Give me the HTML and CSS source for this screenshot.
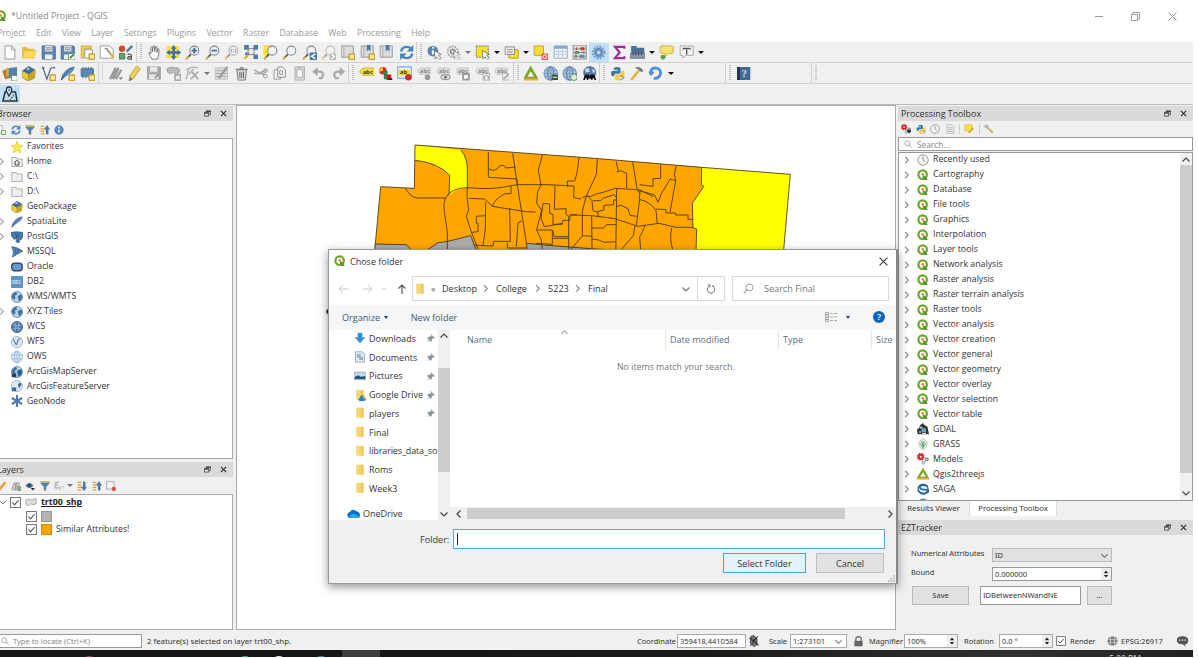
FILE: index.html
```html
<!DOCTYPE html>
<html lang="en">
<head>
<meta charset="utf-8">
<title>*Untitled Project - QGIS</title>
<link rel="stylesheet" href="styles.css">
</head>
<body>
<svg class="defs" aria-hidden="true">
<defs>
<symbol id="q" viewBox="0 0 16 16"><circle cx="7.5" cy="7.5" r="5.6" fill="none" stroke="#6fa52c" stroke-width="3"/><path d="M9 8l5.500 6.500h-4L7.500 10z" fill="#4f8f2a"/><circle cx="7.600" cy="7" r="1.700" fill="#ee8020"/></symbol>
<symbol id="plus" viewBox="0 0 16 16"><rect x="9.500" y="9.500" width="6" height="6" rx="1" fill="#f5e9a0" stroke="#c9a227" stroke-width="1.600"/></symbol>
<symbol id="new" viewBox="0 0 16 16"><path d="M3 1h7l3.500 3.500V15H3z" fill="#fff" stroke="#999"/><path d="M10 1v4h3.500" fill="none" stroke="#999"/></symbol>
<symbol id="open" viewBox="0 0 16 16"><path d="M1 14V2h5l1.500 2H14v3" fill="#e8bb3f"/><path d="M1 14L3.500 6H16l-2 8z" fill="#ffd85a" stroke="#e0ae30" stroke-width=".6"/></symbol>
<symbol id="save" viewBox="0 0 16 16"><path d="M1 1h13l1 1v13H1z" fill="#5b86b5" stroke="#45678c"/><path d="M4 1h8v6H4z" fill="#ddd"/><path d="M4 10h8v5H4z" fill="#eee"/><path d="M5 3h6M5 5h6" stroke="#777" stroke-width=".8"/></symbol>
<symbol id="saveas" viewBox="0 0 16 16"><use href="#save"/><path d="M9 9h7v7H9z" fill="#fff" stroke="#5b9a5b"/><path d="M10.500 14l4-4" stroke="#3d8a3d" stroke-width="2"/></symbol>
<symbol id="layout" viewBox="0 0 16 16"><path d="M1 1h11v3H4v10H1z" fill="#f1cf50" stroke="#b99a3a" stroke-width=".7"/><path d="M5 5h8v9H5z" fill="#fff" stroke="#999"/><use href="#plus"/></symbol>
<symbol id="manager" viewBox="0 0 16 16"><path d="M1 1h10l4 4v9H1z" fill="#fff" stroke="#999"/><path d="M6 4q3-1 3 2l3 3" fill="none" stroke="#888" stroke-width="1.600"/><path d="M11 8l4 5" stroke="#d6b438" stroke-width="2.400"/></symbol>
<symbol id="style" viewBox="0 0 16 16"><circle cx="4" cy="4" r="3.400" fill="#d3492e"/><path d="M1 9h6v6H1z" fill="#6ba06d" stroke="#47784b"/><path d="M9 7l6-6" stroke="#5b7ba0" stroke-width="2.500"/><path d="M10 10q4-1 4 1.500V15h-3q-2-1 0-2.500h3" fill="none" stroke="#555" stroke-width="1.400"/></symbol>
<symbol id="hand" viewBox="0 0 16 16"><path d="M5 15L1.500 8.500q1-1.500 2.500 1V2.500q1-1 1.700 0V7L6.300 1.300q1-1 1.700 0V7l.8-5q1-.8 1.600.3V8l.7-4q1.200-.6 1.600.5L12 12l-1 3z" fill="#fff" stroke="#666" stroke-width=".9"/></symbol>
<symbol id="pan" viewBox="0 0 16 16"><path d="M0 1h14v13H0z" fill="#f7df4c"/><path d="M8 0l3 4H9.300v2.700H12V5l4 3-4 3V9.300H9.300V12H11l-3 4-3-4h1.700V9.300H4V11L0 8l4-3v1.700h2.700V4H5z" fill="#416f9e"/></symbol>
<symbol id="mag" viewBox="0 0 16 16"><circle cx="9.700" cy="6" r="4.800" fill="#eef2f5" stroke="#888" stroke-width="1.100"/><path d="M6 10L1 15" stroke="#555" stroke-width="1.800"/><path d="M3.500 12.500L1 15" stroke="#e0b23c" stroke-width="2.200"/></symbol>
<symbol id="zin" viewBox="0 0 16 16"><use href="#mag"/><path d="M9.700 3v6M6.700 6h6" stroke="#426f9e" stroke-width="2"/></symbol>
<symbol id="zout" viewBox="0 0 16 16"><use href="#mag"/><path d="M6.700 6h6" stroke="#426f9e" stroke-width="2"/></symbol>
<symbol id="z11" viewBox="0 0 16 16"><g opacity=".6"><use href="#mag"/><path d="M7.500 4v4M12 4v4M9.700 4.500v.8M9.700 7v.8" stroke="#666" stroke-width="1.200"/></g></symbol>
<symbol id="zfull" viewBox="0 0 16 16"><path d="M1 0h5v5H1zM11 0h5v5h-5zM11 10h5v5h-5zM2 8h3v3H2z" fill="#4a78a8"/><path d="M3 2l10 10M13 2L2 14" stroke="#777" stroke-width="1.400"/><circle cx="8.500" cy="7" r="3.500" fill="#e8eef2" stroke="#777"/><path d="M5 11l-4 4" stroke="#dcae38" stroke-width="2"/></symbol>
<symbol id="zsel" viewBox="0 0 16 16"><path d="M0 0h9v11H0z" fill="#f6e13a"/><use href="#mag"/></symbol>
<symbol id="zlast" viewBox="0 0 16 16"><use href="#mag"/><path d="M8 8h8v8H8z" fill="#4c7ba9"/><path d="M14 9.500L10 12l4 2.500" stroke="#fff" fill="none" stroke-width="1.500"/></symbol>
<symbol id="znext" viewBox="0 0 16 16"><g opacity=".5"><use href="#mag"/><path d="M9 9h7v7H9z" fill="#888"/><path d="M11 10l3 2.500L11 15" stroke="#fff" fill="none" stroke-width="1.500"/></g></symbol>
<symbol id="book" viewBox="0 0 16 16"><path d="M1 1h13v12H1z" fill="#ddd" stroke="#999"/><path d="M4 1v12" stroke="#aaa"/></symbol>
<symbol id="booka" viewBox="0 0 16 16"><use href="#book"/><use href="#plus"/></symbol>
<symbol id="bookb" viewBox="0 0 16 16"><use href="#book"/><path d="M7 0h4v7L9 5 7 7z" fill="#4c7ba9"/><use href="#plus"/></symbol>
<symbol id="bookc" viewBox="0 0 16 16"><use href="#book"/><path d="M7 0h4v7L9 5 7 7z" fill="#4c7ba9"/></symbol>
<symbol id="refresh" viewBox="0 0 16 16"><path d="M2 7q1-5 6-5 3 0 4.500 2M14 9q-1 5-6 5-3 0-4.500-2" fill="none" stroke="#4a84bd" stroke-width="2.600"/><path d="M15 0v7H8zM1 16V9h7z" fill="#4a84bd"/></symbol>
<symbol id="cursor" viewBox="0 0 16 16"><path d="M7.500 6l1 9 2-2.500 3 3 1.500-1.500-3-3L15 10z" fill="#fff" stroke="#666" stroke-width=".8"/></symbol>
<symbol id="ident" viewBox="0 0 16 16"><circle cx="6" cy="6.500" r="5.700" fill="#5686b8"/><path d="M6 5.500V10" stroke="#fff" stroke-width="2"/><circle cx="6.300" cy="3" r="1.100" fill="#fff"/><use href="#cursor"/></symbol>
<symbol id="act" viewBox="0 0 16 16"><circle cx="7" cy="7" r="5.500" fill="none" stroke="#aaa" stroke-width="2" stroke-dasharray="2 1"/><circle cx="7" cy="7" r="2.300" fill="none" stroke="#999" stroke-width="2"/><use href="#cursor" opacity=".6"/></symbol>
<symbol id="selr" viewBox="0 0 16 16"><path d="M1 1h13v12H1z" fill="#f8de32" stroke="#777" stroke-dasharray="2 1"/><use href="#cursor"/></symbol>
<symbol id="selform" viewBox="0 0 16 16"><path d="M5 5h10v9H5z" fill="#f8de32" stroke="#b39c2e"/><path d="M1 2h10v8H1z" fill="#eee" stroke="#888"/><path d="M3 5h6M3 7.500h6" stroke="#888"/></symbol>
<symbol id="desel" viewBox="0 0 16 16"><path d="M1 1h10v10H1z" fill="#f8de32" stroke="#bda22f"/><path d="M9 9h7v7H9z" fill="#e55b5b"/><circle cx="12.500" cy="12.500" r="2" fill="none" stroke="#fff"/></symbol>
<symbol id="table" viewBox="0 0 16 16"><path d="M1 1h14v13H1z" fill="#f5f8fa" stroke="#8eabc9"/><path d="M1 1h14v3H1z" fill="#83a9d0"/><path d="M1 7h14M1 10h14M5.500 4v10M10 4v10" stroke="#b5cade"/></symbol>
<symbol id="calc" viewBox="0 0 16 16"><path d="M1 0h14v15H1z" fill="#ddd" stroke="#888"/><path d="M2 4h12M2 8h12M2 12h12" stroke="#555" stroke-width=".7"/><path d="M4 4h1M9 4h4" stroke="#d43131" stroke-width="3"/><path d="M3 8h4M12 8h1" stroke="#46a064" stroke-width="3"/><path d="M3 12h2M8 12h5" stroke="#6685a4" stroke-width="3"/></symbol>
<symbol id="gear" viewBox="0 0 16 16"><circle cx="8" cy="8" r="6.400" fill="none" stroke="#6f9ac8" stroke-width="2" stroke-dasharray="2 1.350"/><circle cx="8" cy="8" r="3.700" fill="#8fb2d5" stroke="#6792c0" stroke-width="3"/><circle cx="8" cy="8" r="1.300" fill="#d9e8f6"/></symbol>
<symbol id="sigma" viewBox="0 0 16 16"><path d="M14 4V2H4L9 8l-5 6h10V12" fill="none" stroke="#9b2a9b" stroke-width="2.300"/></symbol>
<symbol id="ruler" viewBox="0 0 16 16"><path d="M1 1h6v2h8v7H1z" fill="#4a6f96"/><path d="M0 9h16v5H0z" fill="#8799ac" stroke="#667"/><path d="M3 9v2M6 9v2M9 9v2M12 9v2" stroke="#333"/></symbol>
<symbol id="tip" viewBox="0 0 16 16"><path d="M3 1h11l1 1v6l-1 1h-4l-4 4V9H3L1 8V2z" fill="#f6e272" stroke="#c8b13f"/><circle cx="4" cy="13" r="2.500" fill="#5c9a5c"/></symbol>
<symbol id="tee" viewBox="0 0 16 16"><path d="M1 1h14v10H7l-3 3v-3H1z" fill="#f4f4f4" stroke="#aaa"/><path d="M4.500 5V3.500h7V5M8 3.500V10" stroke="#555" stroke-width="1.400" fill="none"/></symbol>
<symbol id="dsm" viewBox="0 0 16 16"><path d="M0 5l6-2 2 10-5 1z" fill="#b57c32"/><path d="M4 2l9 1-1 9-8-1z" fill="#dba63b"/><path d="M7 2l9-1v10l-9 2z" fill="#527fae"/><path d="M10 10h6v6h-6z" fill="#fff" stroke="#5a985a"/></symbol>
<symbol id="gpkg" viewBox="0 0 16 16"><path d="M1 6l7-4 7 3-1 8-7 3-6-4z" fill="#edce31" stroke="#8e7821" stroke-width=".7"/><path d="M7 9l8-4-1 8-7 3z" fill="#c4a523"/><path d="M1 5l7-5 7 4-7 5z" fill="#406d99"/><path d="M5 4l3-3 1 3z" fill="#b9d1e5"/></symbol>
<symbol id="vee" viewBox="0 0 16 16"><circle cx="2" cy="2" r="1.500" fill="#6685a4"/><path d="M2 2l4 12 4-11q1-2 5-1" fill="none" stroke="#4d6a88" stroke-width="1.300"/></symbol>
<symbol id="veep" viewBox="0 0 16 16"><use href="#vee"/><use href="#plus"/></symbol>
<symbol id="feather" viewBox="0 0 16 16"><path d="M1 15Q3 3 15 1q-1 5-5 7T1 15z" fill="#6f9ac6" stroke="#39658f" stroke-width=".8"/><path d="M1 15Q5 7 13 2" stroke="#2c4e70" fill="none"/></symbol>
<symbol id="featherp" viewBox="0 0 16 16"><use href="#feather"/><use href="#plus"/></symbol>
<symbol id="virt" viewBox="0 0 16 16"><path d="M1 3h13v8H1z" fill="#5b88b7" stroke="#3f6791"/><path d="M3 1v2M6 1v2M9 1v2M12 1v2M3 11v2M6 11v2" stroke="#6286aa" stroke-width="1.500"/><use href="#plus"/></symbol>
<symbol id="pens" viewBox="0 0 16 16"><path d="M2 14L8 2M5 14L11 2M8 14L14 4" stroke="#999" stroke-width="2.500"/><path d="M11 12h5l-2.500 3z" fill="#888"/></symbol>
<symbol id="pen" viewBox="0 0 16 16"><path d="M3 10L10 0l4 3-7 10-5 3z" fill="#eed154" stroke="#ad9137" stroke-width=".8"/><path d="M2 16l1-4 3 2z" fill="#777"/></symbol>
<symbol id="gsave" viewBox="0 0 16 16"><path d="M1 1h14v13H1z" fill="#aaa" stroke="#999"/><path d="M4 1h8v5H4zM3 9h10v5H3z" fill="#e8e8e8"/><path d="M9 13l5-5" stroke="#999" stroke-width="2"/></symbol>
<symbol id="gpoly" viewBox="0 0 16 16"><path d="M1 3q4-3 8-1 6-1 5 5-4 2-6 0-5 2-7-1z" fill="#bbb" stroke="#999"/><path d="M9.500 9.500h6v6h-6z" fill="#eee" stroke="#aaa" stroke-width="2"/></symbol>
<symbol id="vert" viewBox="0 0 16 16"><path d="M1 4l7-3 6 1M4 3L1 14M9 3L4 9" stroke="#b5b5b5" fill="none" stroke-width="1.500"/><path d="M7 6l7 8M14 6l-8 8" stroke="#aaa" stroke-width="2"/></symbol>
<symbol id="medit" viewBox="0 0 16 16"><path d="M1 2h13v12H1z" fill="#ddd" stroke="#bbb"/><path d="M2 5h11M2 8h11M2 11h11" stroke="#aaa"/><path d="M5 13l9-12" stroke="#999" stroke-width="2.400"/></symbol>
<symbol id="trash" viewBox="0 0 16 16"><path d="M3 4h10l-1 11H4z" fill="#ddd" stroke="#777"/><path d="M1.500 3.500h13M6 2h4M6 6v7M8 6v7M10 6v7" stroke="#777" stroke-width="1.200"/></symbol>
<symbol id="cut" viewBox="0 0 16 16"><path d="M1 4l11 6M1 8h11M7 7l8-3" stroke="#aaa" stroke-width="1.500"/><circle cx="13" cy="5" r="2" fill="none" stroke="#999"/><circle cx="13" cy="11" r="2" fill="none" stroke="#999"/></symbol>
<symbol id="copy" viewBox="0 0 16 16"><path d="M2 4h7v10H2z" fill="#eee" stroke="#999"/><path d="M6 1h5l3 3v8H6z" fill="#f4f4f4" stroke="#888"/><path d="M8 5h3v4H8z" fill="none" stroke="#999"/></symbol>
<symbol id="paste" viewBox="0 0 16 16"><path d="M3 1h10v14H3z" fill="#ddd" stroke="#aaa"/><path d="M5 4h6v8H5zM6 2h4" fill="#fff" stroke="#aaa"/></symbol>
<symbol id="undo" viewBox="0 0 16 16"><path d="M4 6h6q5 2 1 7H8" fill="none" stroke="#aaa" stroke-width="2.500"/><path d="M7 1v10L1 6z" fill="#aaa"/></symbol>
<symbol id="redo" viewBox="0 0 16 16"><path d="M12 6H6q-5 2-1 7h3" fill="none" stroke="#aaa" stroke-width="2.500"/><path d="M9 1v10l6-5z" fill="#aaa"/></symbol>
<symbol id="abc" viewBox="0 0 16 16"><path d="M0 6l4-4h12v8H4z" fill="#f4dc3d" stroke="#c2a82b" stroke-width=".7"/><text x="4" y="8.500" class="tiny">abc</text></symbol>
<symbol id="diag" viewBox="0 0 16 16"><circle cx="5" cy="5" r="4" fill="#d32c20"/><path d="M5 1v4L1 6q0-4 4-5z" fill="#f1d22e"/><path d="M6 5h4v9H6z" fill="#218d45"/><path d="M9 9h5v6H9z" fill="#c52117"/><path d="M11 13h4v2h-4z" fill="#222"/></symbol>
<symbol id="labhi" viewBox="0 0 16 16"><path d="M.5 1h15v12H.500z" fill="#e7f1fa" stroke="#4f9be0"/><path d="M1 4h13v6H1z" fill="#f4dc3d"/><text x="3" y="9" class="tiny">ab</text><circle cx="12" cy="12" r="3.500" fill="#cc2f2b"/></symbol>
<symbol id="gabc" viewBox="0 0 16 16"><path d="M0 5l3-3h11v7H3z" fill="#ddd" stroke="#bbb" stroke-width=".7"/><text x="3" y="7.800" class="tiny faded">abc</text></symbol>
<symbol id="ga" viewBox="0 0 16 16"><use href="#gabc"/><circle cx="11" cy="12" r="3" fill="#999"/></symbol>
<symbol id="gb" viewBox="0 0 16 16"><use href="#gabc"/><ellipse cx="10" cy="12" rx="5" ry="2.600" fill="#ddd" stroke="#888"/><circle cx="10" cy="12" r="1.500" fill="#777"/></symbol>
<symbol id="gc" viewBox="0 0 16 16"><use href="#gabc"/><path d="M8.500 8.500h6v6h-6z" fill="#fff" stroke="#999" stroke-width="2"/></symbol>
<symbol id="gd" viewBox="0 0 16 16"><use href="#gabc"/><path d="M8.500 8h7v7h-7z" fill="#eee" stroke="#aaa"/><path d="M10 14q-1-4 2-4 3 0 2 4" fill="none" stroke="#999"/></symbol>
<symbol id="ge" viewBox="0 0 16 16"><use href="#gabc"/><path d="M9 8h7v7H9z" fill="#eee" stroke="#bbb"/><path d="M10 14l5-5" stroke="#aaa" stroke-width="2"/></symbol>
<symbol id="tri" viewBox="0 0 16 16"><path d="M8 2.500L14 13H2z" fill="#fff" stroke="#7aaa25" stroke-width="3"/><path d="M0 13h16v2.500H0z" fill="#f0a92f"/></symbol>
<symbol id="world" viewBox="0 0 16 16"><circle cx="8" cy="8" r="7.200" fill="#a9c6e2" stroke="#5d86ae"/><ellipse cx="8" cy="8" rx="3.200" ry="7" fill="none" stroke="#4a749f"/><path d="M8 1v14M1 8h14M2 4.500h12M2 11.500h12" stroke="#6b91b7" stroke-width=".8"/></symbol>
<symbol id="worlda" viewBox="0 0 16 16"><use href="#world"/><path d="M9 9h7v6H9z" fill="#335c35"/><path d="M10 12h5" stroke="#fff"/></symbol>
<symbol id="worldb" viewBox="0 0 16 16"><use href="#world"/><circle cx="12.500" cy="12" r="3.500" fill="#d9ead7" stroke="#5f985f"/></symbol>
<symbol id="worldc" viewBox="0 0 16 16"><circle cx="8" cy="7" r="7" fill="#557ca5"/><path d="M3 3l4-1 1 4-4 1zM10 3l4 2-2 3z" fill="#cadceb"/><path d="M3 9h4l1 2 1-2h4l2 6h-5l-2-3-2 3H1z" fill="#111"/><circle cx="4" cy="14" r="1" fill="#fff"/><circle cx="12" cy="14" r="1" fill="#fff"/></symbol>
<symbol id="py" viewBox="0 0 16 16"><path d="M4 4V2q3-2 7 0v5q-1 2-5 1-2 1-2 3H2Q-1 5 4 5h4V4z" fill="#3977a8"/><path d="M12 5h2q3 4 0 7H8v1h4v1q-4 3-7 0v-4q1-2 5-1 2-1 2-4z" fill="#f7cd3e"/><path d="M11 10l4 2.500-4 2.500" stroke="#777" fill="none"/></symbol>
<symbol id="hammer" viewBox="0 0 16 16"><path d="M2 15L11 4" stroke="#e4b338" stroke-width="2.600"/><path d="M6 2q5-3 9 3l-2 2q-2-4-7-5z" fill="#777"/></symbol>
<symbol id="swirl" viewBox="0 0 16 16"><path d="M3 8q-1-6 5-6 6 1 5 7-2 5-7 4" fill="none" stroke="#4f8ed1" stroke-width="3"/><path d="M0 6h7l-4 5z" fill="#4f8ed1"/></symbol>
<symbol id="help" viewBox="0 0 16 16"><path d="M1 1h14v14H1z" fill="#416a94"/><path d="M1 1h3v14H1z" fill="#223548"/><text x="6" y="12" class="qm">?</text></symbol>
<symbol id="ez" viewBox="0 0 16 16"><path d="M4.500 6H3L1 15h14l-1.500-9H10" fill="#c2d9ea" stroke="#28333c" stroke-width="1.500"/><path d="M7 10L4.500 5.500Q3.500 1 7 1t2.500 4.500z" fill="#c2d9ea" stroke="#28333c" stroke-width="1.300"/><circle cx="7" cy="4" r=".8" fill="#28333c"/><path d="M11 8.500q1.500 2-1 3t-1 3" stroke="#28333c" stroke-dasharray="2 1" fill="none"/></symbol>
<symbol id="float" viewBox="0 0 16 16"><path d="M5 6V2h10v8h-4M1 6h10v8H1z" fill="none" stroke="#333" stroke-width="1.600"/><path d="M5 2.800h10M1 7h10" stroke="#333" stroke-width="2.500"/></symbol>
<symbol id="x" viewBox="0 0 16 16"><path d="M2 2l12 12M14 2L2 14" stroke="currentColor" stroke-width="2.800"/></symbol>
<symbol id="xt" viewBox="0 0 16 16"><path d="M1 1l14 14M15 1L1 15" stroke="currentColor" stroke-width="1.900"/></symbol>
<symbol id="filter" viewBox="0 0 16 16"><path d="M1 1h14v3l-5 5v6H6V9L1 4z" fill="#4f82b4"/><path d="M1 0h14v3H1z" fill="#ccbc6d"/></symbol>
<symbol id="collapse" viewBox="0 0 16 16"><path d="M1 2h6M1 6h6M1 10h6M1 14h6" stroke="#dda13d" stroke-width="2"/><path d="M11.500 15V5" stroke="#4b78a6" stroke-width="4"/><path d="M6 7l5.500-7L16 7z" fill="#4b78a6"/></symbol>
<symbol id="expand" viewBox="0 0 16 16"><path d="M1 2h6M1 6h6M1 10h6M1 14h6" stroke="#dda13d" stroke-width="2"/><path d="M11.500 1v10" stroke="#4b78a6" stroke-width="4"/><path d="M6 9l5.500 7L16 9z" fill="#4b78a6"/></symbol>
<symbol id="info" viewBox="0 0 16 16"><circle cx="8" cy="8" r="7.500" fill="#5688bb"/><path d="M8 7v5" stroke="#fff" stroke-width="2.200"/><circle cx="8" cy="4" r="1.400" fill="#fff"/></symbol>
<symbol id="addl" viewBox="0 0 16 16"><path d="M1 1h9v12H1z" fill="#fff" stroke="#888"/><path d="M9 9h6v6H9z" fill="#fff" stroke="#5d995d" stroke-width="1.500"/></symbol>
<symbol id="star" viewBox="0 0 16 16"><path d="M8 0l2.300 5.700 5.700.5-4.400 3.700L13 15.700l-5-3.200-5 3.200 1.400-5.800L0 6.200l5.700-.5z" fill="#fbe94b" stroke="#d8bd23" stroke-width=".8"/></symbol>
<symbol id="folder" viewBox="0 0 16 16"><path d="M1 3.500V2h6l1 2h7v10H1z" fill="#eee" stroke="#999"/></symbol>
<symbol id="home" viewBox="0 0 16 16"><use href="#folder"/><path d="M4.500 9L8 5.500 11.500 9M5.500 8.500V12h5V8.500" fill="none" stroke="#444" stroke-width="1.300"/></symbol>
<symbol id="pg" viewBox="0 0 16 16"><path d="M0 2q7-2 16 0 1 5-2 9l-3 1v3q-3 2-4-1v-4l-3 1Q0 7 0 2z" fill="#4d7caf" stroke="#2f567d"/><path d="M6 3q3 3 1 6M11 3q-2 3 0 6" stroke="#234669" fill="none"/></symbol>
<symbol id="mssql" viewBox="0 0 16 16"><path d="M1 1q7 0 15 6-6 2-14 8 3-7-1-14z" fill="#547faf" stroke="#34608b"/><path d="M5 2q3 5 0 11M9 4q2 3 0 7" stroke="#40699a" fill="none"/></symbol>
<symbol id="ora" viewBox="0 0 16 16"><rect x="1" y="3" width="14" height="10" rx="4" fill="#6c9ac8" stroke="#28496c" stroke-width="1.700"/></symbol>
<symbol id="db2" viewBox="0 0 16 16"><rect width="16" height="16" rx="1" fill="#5f92c5"/><text x="1" y="10" class="db">DB2</text></symbol>
<symbol id="earth" viewBox="0 0 16 16"><circle cx="8" cy="8" r="7.400" fill="#b6d0e8" stroke="#5c87b0"/><path d="M2 4l5-3 1 4-3 1 1 3-2 3-3-4zM9 7l5-3 1 5-3 5-2-2z" fill="#426f9d"/></symbol>
<symbol id="wcs" viewBox="0 0 16 16"><circle cx="8" cy="8" r="7.400" fill="#527eaa" stroke="#2f5375"/><path d="M2 5q6 3 12 0M2 11q6-3 12 0M5 2q3 6 0 12M11 2q-3 6 0 12" stroke="#9cb9d6" fill="none"/></symbol>
<symbol id="wfs" viewBox="0 0 16 16"><circle cx="8" cy="8" r="7.400" fill="#d8e6f2" stroke="#88a9c9"/><path d="M3 4l4 8 3-8q1-1 3 0" stroke="#416991" fill="none" stroke-width="1.300"/></symbol>
<symbol id="ows" viewBox="0 0 16 16"><circle cx="8" cy="8" r="7.400" fill="#e6f1fa" stroke="#8db2d5"/><ellipse cx="8" cy="8" rx="3.500" ry="7.400" fill="none" stroke="#8db2d5"/><path d="M1 5.500h14M1 10.500h14M8 1v14" stroke="#8db2d5"/></symbol>
<symbol id="arcm" viewBox="0 0 16 16"><use href="#earth"/><path d="M1 10h6v5H1z" fill="#1e3d5a"/><path d="M8 7l5-3 1 6-4 5z" fill="#305d88"/></symbol>
<symbol id="arcf" viewBox="0 0 16 16"><circle cx="8" cy="8" r="7.400" fill="#dbe9f5" stroke="#8db2d5"/><path d="M1 10h6v5H1zM9 6l3-3 2 3-3 5z" fill="#44698d"/></symbol>
<symbol id="node" viewBox="0 0 16 16"><path d="M8 0v16M1 4l14 8M15 4L1 12" stroke="#507dab" stroke-width="2.700"/></symbol>
<symbol id="sheet" viewBox="0 0 16 16"><path d="M3 1h8l3 3v11H3z" fill="#eee" stroke="#aaa"/><path d="M5 6h7M5 9h7M5 12h7" stroke="#999"/></symbol>
<symbol id="clock" viewBox="0 0 16 16"><circle cx="8" cy="8" r="7" fill="#f3f5f5" stroke="#8c9296" stroke-width="1.200"/><path d="M8 3v5l3 3" stroke="#8c9296" fill="none" stroke-width="1.300"/></symbol>
<symbol id="model" viewBox="0 0 16 16"><circle cx="5" cy="5" r="2.800" fill="#fff" stroke="#d52c2c" stroke-width="3"/><circle cx="5" cy="5" r="4.500" fill="none" stroke="#d52c2c" stroke-width="1.500" stroke-dasharray="2 1.500"/><circle cx="13" cy="8.500" r="1.800" fill="#eee" stroke="#888" stroke-width="2"/><circle cx="8.500" cy="13" r="1.800" fill="#eee" stroke="#9db7e0" stroke-width="2"/></symbol>
<symbol id="modelm" viewBox="0 0 16 16"><use href="#model"/><path d="M9 9h7v3l-3 3-4-4z" fill="#333"/></symbol>
<symbol id="note" viewBox="0 0 16 16"><path d="M1 1h12v10H9l-2 3v-3H1z" fill="#f4df4e" stroke="#d3bc38"/><path d="M8 14l7-8" stroke="#d1a936" stroke-width="2.500"/></symbol>
<symbol id="wrench" viewBox="0 0 16 16"><path d="M1 3l3-2 3 3-1 3-3-1zM6 6l7 7" stroke="#999" stroke-width="1.500" fill="#ccc"/><path d="M8 8l6 6" stroke="#cdb553" stroke-width="3"/></symbol>
<symbol id="gdal" viewBox="0 0 16 16"><path d="M0 8l3-1 1-4 4-3 1 2 5 3 2 10H1z" fill="#333"/><path d="M6 7h6v5H6z" fill="#5cabc4"/><path d="M4 5h3v2H4zM3 11h2v2H3zM7 13h5v2H7z" fill="#dde"/></symbol>
<symbol id="grass" viewBox="0 0 16 16"><path d="M2 6l6-6 6 6-2 7-4 3-4-3z" fill="#e3e9e3" stroke="#aaa" stroke-width=".7"/><path d="M8 14V5M8 13L4 7M8 13l4-6M8 11L6 4M8 11l2-7" stroke="#5fa565" stroke-width="1.100"/></symbol>
<symbol id="saga" viewBox="0 0 16 16"><circle cx="8" cy="8" r="6.500" fill="#eef6fc" stroke="#266798" stroke-width="1.800"/><path d="M14 4Q5 1 4 5t8 4-1 5Q6 15 1 10" fill="none" stroke="#266798" stroke-width="2.300"/></symbol>
<symbol id="chev" viewBox="0 0 16 16"><path d="M5 1l7 7-7 7" fill="none" stroke="currentColor" stroke-width="2.400"/></symbol>
<symbol id="find" viewBox="0 0 16 16"><circle cx="6.500" cy="6.500" r="5" fill="none" stroke="currentColor" stroke-width="1.400"/><path d="M10 10l5 5" stroke="currentColor" stroke-width="1.600"/></symbol>
<symbol id="spin" viewBox="0 0 16 16"><path d="M3 6l5-6 5 6zM3 10l5 6 5-6z" fill="#222"/></symbol>
<symbol id="check" viewBox="0 0 16 16"><path d="M.8.800h14.400v14.400H.800z" fill="#fff" stroke="#777" stroke-width="1.500"/><path d="M3.500 8l3 3.500 6-7" fill="none" stroke="#555" stroke-width="1.600"/></symbol>
<symbol id="ftab" viewBox="0 0 16 16"><path d="M3 1h8l1 1v13l-9-1z" fill="#f7d672"/><path d="M9 1h3l1 1v12h-3z" fill="#f0c860"/></symbol>
<symbol id="pin" viewBox="0 0 16 16"><path d="M8 1l7 7-2 1-1-1-3 3v3l-2 1-6-7 2-2h3l3-3zM4 12l-4 4" fill="#8a959f" stroke="#8a959f"/></symbol>
</defs></svg>

<div class="app">
  <header class="title"><svg class="i12"><use href="#q"/></svg><span>*Untitled Project - QGIS</span>
    <div class="wins"><i class="min"></i><svg viewBox="0 0 9 9"><path d="M.5 2.500h6v6h-6zM2 2V.5h6.500V7H7" fill="none" stroke="#999"/></svg><svg viewBox="0 0 9 9"><path d="M.5.500l8 8M8.500.500l-8 8" stroke="#999"/></svg></div>
  </header>
  <nav class="menu"><span>Project</span><span>Edit</span><span>View</span><span>Layer</span><span>Settings</span><span>Plugins</span><span>Vector</span><span>Raster</span><span>Database</span><span>Web</span><span>Processing</span><span>Help</span></nav>
  <div class="tb">
    <div class="grp g137"><svg><use href="#new"/></svg><svg><use href="#open"/></svg><svg><use href="#save"/></svg><svg><use href="#saveas"/></svg><svg><use href="#layout"/></svg><svg><use href="#manager"/></svg><svg><use href="#style"/></svg></div>
    <div class="grp g280"><i class="grip"></i><svg><use href="#hand"/></svg><svg><use href="#pan"/></svg><svg><use href="#zin"/></svg><svg><use href="#zout"/></svg><svg><use href="#z11"/></svg><svg><use href="#zfull"/></svg><svg><use href="#zsel"/></svg><svg><use href="#mag"/></svg><svg><use href="#zlast"/></svg><svg><use href="#znext"/></svg><svg><use href="#booka"/></svg><svg><use href="#bookb"/></svg><svg><use href="#bookc"/></svg><svg><use href="#refresh"/></svg></div>
    <div class="grp last"><i class="grip"></i><svg><use href="#ident"/></svg><svg><use href="#act"/></svg><b class="dd dim"></b><svg><use href="#selr"/></svg><b class="dd"></b><svg><use href="#selform"/></svg><b class="dd"></b><svg><use href="#desel"/></svg><svg><use href="#table"/></svg><svg><use href="#calc"/></svg><svg class="on"><use href="#gear"/></svg><svg><use href="#sigma"/></svg><svg><use href="#ruler"/></svg><b class="dd"></b><svg><use href="#tip"/></svg><svg><use href="#tee"/></svg><b class="dd"></b></div>
  </div>
  <div class="tb">
    <div class="grp g98"><svg><use href="#dsm"/></svg><svg><use href="#gpkg"/></svg><svg><use href="#veep"/></svg><svg><use href="#featherp"/></svg><svg><use href="#virt"/></svg></div>
    <div class="grp g251"><i class="grip"></i><svg><use href="#pens"/></svg><svg><use href="#pen"/></svg><svg><use href="#gsave"/></svg><svg><use href="#gpoly"/></svg><svg><use href="#vert"/></svg><b class="dd gray"></b><svg><use href="#medit"/></svg><svg><use href="#trash"/></svg><svg><use href="#cut"/></svg><svg><use href="#copy"/></svg><svg><use href="#paste"/></svg><svg><use href="#undo"/></svg><svg><use href="#redo"/></svg></div>
    <div class="grp g164"><i class="grip"></i><svg><use href="#abc"/></svg><svg><use href="#diag"/></svg><svg><use href="#labhi"/></svg><svg><use href="#ga"/></svg><svg><use href="#gb"/></svg><svg><use href="#gc"/></svg><svg><use href="#gd"/></svg><svg><use href="#ge"/></svg></div>
    <div class="grp g86"><i class="grip"></i><svg><use href="#tri"/></svg><svg><use href="#worlda"/></svg><svg><use href="#worldb"/></svg><svg><use href="#worldc"/></svg></div>
    <div class="grp g126"><i class="grip"></i><svg><use href="#py"/></svg><svg><use href="#hammer"/></svg><svg><use href="#swirl"/></svg><b class="dd"></b></div>
    <div class="grp g87"><i class="grip"></i><svg><use href="#help"/></svg></div>
    <div class="grp last"><i class="grip"></i></div>
  </div>
  <div class="tb third"><svg class="ezi"><use href="#ez"/></svg></div>

  <main class="work">
    <aside class="left">
      <div class="dt cut"><span>Browser</span><svg><use href="#float"/></svg><svg><use href="#x"/></svg></div>
      <div class="mini m1"><svg><use href="#addl"/></svg><svg><use href="#refresh"/></svg><svg><use href="#filter"/></svg><svg><use href="#collapse"/></svg><svg><use href="#info"/></svg></div>
      <ul class="tree browser">
        <li><i></i><svg><use href="#star"/></svg>Favorites</li>
        <li class="ex"><i></i><svg><use href="#home"/></svg>Home</li>
        <li class="ex"><i></i><svg><use href="#folder"/></svg>C:\</li>
        <li class="ex"><i></i><svg><use href="#folder"/></svg>D:\</li>
        <li><i></i><svg><use href="#gpkg"/></svg>GeoPackage</li>
        <li class="ex"><i></i><svg><use href="#feather"/></svg>SpatiaLite</li>
        <li class="ex"><i></i><svg><use href="#pg"/></svg>PostGIS</li>
        <li><i></i><svg><use href="#mssql"/></svg>MSSQL</li>
        <li><i></i><svg><use href="#ora"/></svg>Oracle</li>
        <li><i></i><svg><use href="#db2"/></svg>DB2</li>
        <li><i></i><svg><use href="#earth"/></svg>WMS/WMTS</li>
        <li class="ex"><i></i><svg><use href="#earth"/></svg>XYZ Tiles</li>
        <li><i></i><svg><use href="#wcs"/></svg>WCS</li>
        <li><i></i><svg><use href="#wfs"/></svg>WFS</li>
        <li><i></i><svg><use href="#ows"/></svg>OWS</li>
        <li><i></i><svg><use href="#arcm"/></svg>ArcGisMapServer</li>
        <li><i></i><svg><use href="#arcf"/></svg>ArcGisFeatureServer</li>
        <li><i></i><svg><use href="#node"/></svg>GeoNode</li>
      </ul>
      <div class="dt cut gap"><span>Layers</span><svg><use href="#float"/></svg><svg><use href="#x"/></svg></div>
      <div class="mini m2"><svg viewBox="0 0 16 16"><path d="M0 7l6 6 9-11" stroke="#e0a23b" stroke-width="4" fill="none"/></svg><svg viewBox="0 0 16 16"><path d="M1 14L5 3h3v11zM8 3h5v11H7z" fill="#ccc" stroke="#888"/><path d="M10 8h6v8h-6z" fill="#84a884"/></svg><svg viewBox="0 0 16 16"><path d="M0 7q7-8 14 0-7 8-14 0z" fill="#7b8ea2"/><circle cx="7" cy="7" r="3.500" fill="#2c5379"/><path d="M9 11h7l-3.500 4z" fill="#222"/></svg><svg><use href="#filter"/></svg><svg viewBox="0 0 16 16"><path d="M8 2Q1 1 2 5l4 1Q0 7 2 11h5" fill="none" stroke="#aaa" stroke-width="1.700"/><path d="M8 9h3v5H8zM13 9h3v5" fill="none" stroke="#aaa"/></svg><b class="dd gray"></b><svg><use href="#expand"/></svg><svg><use href="#collapse"/></svg><svg viewBox="0 0 16 16"><path d="M1 1h12v12H1z" fill="#f4f4f4" stroke="#888"/><circle cx="12.500" cy="12.500" r="3.500" fill="#e44b4b"/></svg></div>
      <div class="layers">
        <div class="l1"><svg class="c7" viewBox="0 0 16 16"><path d="M1 5l6 6 7-7" fill="none" stroke="#444" stroke-width="2"/></svg><svg class="ck"><use href="#check"/></svg><svg class="i12" viewBox="0 0 16 16"><path d="M1 4q4-3 8 0l6-2v7q-4 3-7 0-3 4-6 2Q0 8 1 4z" fill="#ddd" stroke="#999"/></svg><strong>trt00_shp</strong></div>
        <div class="l2"><svg class="ck"><use href="#check"/></svg><i class="sw"></i></div>
        <div class="l2"><svg class="ck"><use href="#check"/></svg><i class="sw or"></i><span>Similar Attributes!</span></div>
      </div>
    </aside>

    <section class="canvas">
      <svg class="map" viewBox="0 0 1290 390">
        <path d="M150 30L690 70 1010 97 1009 150 1017 154 982 204 984 278 995 282 992 390H25L47 155 148 160z" fill="#ffa500"/>
        <path d="M29 327l95 2 15 16 50-2 30-20 30-4 68-17 17 44v44H25zM486 325l50 5 154 12 60 8v40H486z" fill="#aaa"/>
        <path d="M150 30l138 15q20 25 19 60v53q-35 2-55 23l2-60q-35-38-104-45z" fill="#ff0"/>
        <path d="M1010 97l266 21-24 272H992l3-108-11-4-2-74 35-50-8-4z" fill="#ff0"/>
        <g fill="none" stroke="#33290e" stroke-width="3" stroke-linejoin="round" opacity=".78">
          <path d="M25 390L47 155l101 5 2-130 540 40 320 27 266 21-24 272M1010 97l-1 53 8 4-35 50 2 74 11 4-3 108"/>
          <path d="M150 76q70 7 104 45l-2 60M288 45q20 25 19 60v53q-50 0-66 32-8 22-3 40l9 60v55M120 160q17 26 36 29h86M29 327l95 2 15 16 50-2 30-20 30-4 68-17 17 44M307 158l-1 30 5 36-7 20 16 50 22 55"/>
          <path d="M307 158q70 6 110-2l40-7h90l80 4-1 35 22 4M370 52v49q20 12 32-6 14-10 20 4l30-3M370 100v27l85 5M443 55l14 95 22 140 8 55M532 60l-12 45 8 45-10 20-3 35 15 20-15 60 14 30 4 40"/>
          <path d="M456 132l1 18M311 190l48 2 23 22 100 16 30 1M382 214q7-20 28-32l10-6h18v-22M362 202l-1 80-7 50-28-2M360 242l-26 2v21h5v25l-18 2M354 332l30 1 2-14h50l-2-100M427 323v16h58M470 258l-11 6-5 70M534 205l20 2v28l10 3v30h27l3-12h20l2-17h20M570 153l-2 70 35-2v17l8 5v100M534 205l-6 45 10 25 54-10M518 285h44v43l-50-3M562 310h50M562 285l6 20h44"/>
          <path d="M642 68l-6 45-7 25h-22l1 18M697 73l-3 45-30 65-12 45v75l-34 40M652 188l15-6q7 7 26-5l18-4 40-13 74 5 40 20M667 182l14 15 3 30 15 5v15M684 197h23l9-8 32-10 7 10M716 225l1-14 29-2v-14h8M716 225l-18 5M755 160l-3 220M755 111l12-4 18 8v45M754 80l5 27M803 82l14 83 7 10M887 88v42l-23 1v23l-40-5M934 92l-6 25 4 20-17 95M932 137l-16-5-25 40-12 30-10-22-47-13M825 168l-2 25q35 8 50 34l4 40M824 193l-10 78M755 214l14-3 20 10 6 20 20 3M873 222l30 2v10h29v6h37v13h15M615 240l65 2 70 9 68 23 64-9 50 12h52M680 242l1 98M652 302l30 2M681 279h35l8-10h30M681 312l20 3 17 7 35-2M810 272l-5 30-39 45M840 270l-8 22-8 13 3 40M920 279q-8 36 5 70M486 325l50 5 154 12 60 3"/>
        </g>
      </svg>
      <i class="dot"></i>
    </section>

    <aside class="right">
      <div class="dt"><span>Processing Toolbox</span><svg><use href="#float"/></svg><svg><use href="#x"/></svg></div>
      <div class="mini m3"><svg><use href="#modelm"/></svg><svg><use href="#py"/></svg><svg><use href="#clock"/></svg><svg><use href="#sheet"/></svg><i></i><svg><use href="#note"/></svg><i></i><svg><use href="#wrench"/></svg></div>
      <div class="search"><svg><use href="#find"/></svg>Search...</div>
      <div class="plist">
        <ul class="tree tools">
          <li><svg class="c7"><use href="#chev"/></svg><svg><use href="#clock"/></svg>Recently used</li>
          <li><svg class="c7"><use href="#chev"/></svg><svg><use href="#q"/></svg>Cartography</li>
          <li><svg class="c7"><use href="#chev"/></svg><svg><use href="#q"/></svg>Database</li>
          <li><svg class="c7"><use href="#chev"/></svg><svg><use href="#q"/></svg>File tools</li>
          <li><svg class="c7"><use href="#chev"/></svg><svg><use href="#q"/></svg>Graphics</li>
          <li><svg class="c7"><use href="#chev"/></svg><svg><use href="#q"/></svg>Interpolation</li>
          <li><svg class="c7"><use href="#chev"/></svg><svg><use href="#q"/></svg>Layer tools</li>
          <li><svg class="c7"><use href="#chev"/></svg><svg><use href="#q"/></svg>Network analysis</li>
          <li><svg class="c7"><use href="#chev"/></svg><svg><use href="#q"/></svg>Raster analysis</li>
          <li><svg class="c7"><use href="#chev"/></svg><svg><use href="#q"/></svg>Raster terrain analysis</li>
          <li><svg class="c7"><use href="#chev"/></svg><svg><use href="#q"/></svg>Raster tools</li>
          <li><svg class="c7"><use href="#chev"/></svg><svg><use href="#q"/></svg>Vector analysis</li>
          <li><svg class="c7"><use href="#chev"/></svg><svg><use href="#q"/></svg>Vector creation</li>
          <li><svg class="c7"><use href="#chev"/></svg><svg><use href="#q"/></svg>Vector general</li>
          <li><svg class="c7"><use href="#chev"/></svg><svg><use href="#q"/></svg>Vector geometry</li>
          <li><svg class="c7"><use href="#chev"/></svg><svg><use href="#q"/></svg>Vector overlay</li>
          <li><svg class="c7"><use href="#chev"/></svg><svg><use href="#q"/></svg>Vector selection</li>
          <li><svg class="c7"><use href="#chev"/></svg><svg><use href="#q"/></svg>Vector table</li>
          <li><svg class="c7"><use href="#chev"/></svg><svg><use href="#gdal"/></svg>GDAL</li>
          <li><svg class="c7"><use href="#chev"/></svg><svg><use href="#grass"/></svg>GRASS</li>
          <li><svg class="c7"><use href="#chev"/></svg><svg><use href="#model"/></svg>Models</li>
          <li><svg class="c7"><use href="#chev"/></svg><svg><use href="#tri"/></svg>Qgis2threejs</li>
          <li><svg class="c7"><use href="#chev"/></svg><svg><use href="#saga"/></svg>SAGA</li>
          <li><svg class="c7"></svg><svg><use href="#info"/></svg></li>
        </ul>
        <div class="vs"><svg class="up"><use href="#chev"/></svg><i></i><svg class="dn"><use href="#chev"/></svg></div>
      </div>
      <div class="tabs"><span>Results Viewer</span><span class="cur">Processing Toolbox</span></div>
      <div class="dt"><span>EZTracker</span><svg><use href="#float"/></svg><svg><use href="#x"/></svg></div>
      <div class="form">
        <label>Numerical Attributes</label><div class="combo"><span>ID</span><svg class="dn"><use href="#chev"/></svg></div>
        <label>Bound</label><div class="spin"><span>0.000000</span><svg><use href="#spin"/></svg></div>
      </div>
      <div class="btns"><button class="save">Save</button><div class="inp">IDBetweenNWandNE</div><button class="dots">...</button></div>
    </aside>
  </main>

  <footer class="status">
    <div class="loc"><svg><use href="#find"/></svg>Type to locate (Ctrl+K)</div>
    <span class="msg">2 feature(s) selected on layer trt00_shp.</span>
    <span class="w40">Coordinate</span><div class="box w69">359418,4410584</div>
    <svg class="mouse" viewBox="0 0 16 16"><path d="M4 1l4-1 4 5v7l-4 3-5-5z" fill="#777" stroke="#333"/><path d="M2 3l12 10M13 1L3 14M5 7l7-3" stroke="#333" stroke-width="1.500"/></svg>
    <span class="w21">Scale</span><div class="box w56 sp">1:273101<svg class="dn c7"><use href="#chev"/></svg></div>
    <svg class="lock" viewBox="0 0 16 16"><path d="M4 8V5q0-4 4-4t4 4v3" fill="none" stroke="#777" stroke-width="2"/><path d="M2 7h12v8H2z" fill="#666"/></svg>
    <span class="w35">Magnifier</span><div class="box w54 sp">100%<svg class="sb"><use href="#spin"/></svg></div>
    <span class="w35 rot">Rotation</span><div class="box w54 sp">0.0 °<svg class="sb"><use href="#spin"/></svg></div>
    <svg class="ck"><use href="#check"/></svg><span class="ren">Render</span>
    <svg class="glb" viewBox="0 0 16 16"><ellipse cx="8" cy="8" rx="7.500" ry="6.500" fill="#777"/><path d="M0 6h16M0 10h16M5 2v12M11 2v12" stroke="#ddd"/></svg><span class="w45">EPSG:26917</span>
    <svg class="bub" viewBox="0 0 16 16"><path d="M1 7q0-5 7-5t7 5-4 5l1 3-4-3q-7 0-7-5z" fill="#555"/><path d="M4 7h1.500M7.300 7h1.500M10.500 7H12" stroke="#fff" stroke-width="1.500"/></svg>
  </footer>
  <div class="task"><i class="t1"></i><i class="t2"></i><i class="t3"></i><i class="t4"></i><i class="t5"></i><span>5:00 PM</span></div>

  <div class="dialog">
    <div class="dh"><svg class="i12"><use href="#q"/></svg><span>Chose folder</span><svg class="dx"><use href="#xt"/></svg></div>
    <div class="nav">
      <svg class="arr" viewBox="0 0 56 12"><path d="M1 6h9M5 2L1 6l4 4M25 6h9M30 2l4 4-4 4M44 5l2 2 2-2" fill="none" stroke="#ccc"/></svg>
      <svg class="upa" viewBox="0 0 10 12"><path d="M5 11V2M1.500 5.500L5 2l3.500 3.500" fill="none" stroke="#555" stroke-width="1.200"/></svg>
      <div class="addr"><svg class="i12"><use href="#ftab"/></svg><em>«</em><span class="a1">Desktop</span><svg class="c7"><use href="#chev"/></svg><span class="a2">College</span><svg class="c7"><use href="#chev"/></svg><span class="a3">5223</span><svg class="c7"><use href="#chev"/></svg><span>Final</span><svg class="c7 dn end"><use href="#chev"/></svg></div>
      <div class="rel"><svg viewBox="0 0 16 16"><path d="M5 3.500a6 6 0 1 0 6 0M3 1.500h3.500v4M11 1.500v3" fill="none" stroke="#666" stroke-width="1.500"/></svg></div>
      <div class="sf"><svg class="flip"><use href="#find"/></svg>Search Final</div>
    </div>
    <div class="cmd"><span class="org">Organize</span><b class="dd blue"></b><span class="nf">New folder</span><svg class="vw" viewBox="0 0 12 10"><path d="M.5.500h3v9h-3z" fill="#eee" stroke="#aaa"/><path d="M1 2.500h2M1 5h2M1 7.500h2" stroke="#c88" /><path d="M5 1.500h3m1 0h3M5 5h3m1 0h3M5 8.500h3m1 0h3" stroke="#aaa"/></svg><b class="dd blue"></b><i class="hq">?</i></div>
    <div class="body">
      <ul class="side">
        <li><svg viewBox="0 0 16 16"><path d="M5 1h6v6h4l-7 8-7-8h4z" fill="#2f8fdc"/></svg><span>Downloads</span><svg class="pin"><use href="#pin"/></svg></li>
        <li><svg viewBox="0 0 16 16"><path d="M2 1h9l3 3v11H2z" fill="#e0e8ee" stroke="#8c9aa5"/><path d="M4 4h5v4h3v4H7V9H4z" fill="#8cb5cd"/></svg><span>Documents</span><svg class="pin"><use href="#pin"/></svg></li>
        <li><svg viewBox="0 0 16 16"><path d="M0 3h16v10H0z" fill="#b9dcf0" stroke="#999"/><path d="M1 9l5-2 3 2 6-1v4H1z" fill="#255778"/></svg><span>Pictures</span><svg class="pin"><use href="#pin"/></svg></li>
        <li><svg viewBox="0 0 16 16"><use href="#ftab"/><path d="M10 8h3l3 6-2 2H7l-1-2z" fill="#3974df"/><path d="M10 8l-4 6 1 2 4-6z" fill="#24a45e"/><path d="M11 8h2l3 5h-3z" fill="#f0bf2d"/></svg><span>Google Drive</span><svg class="pin"><use href="#pin"/></svg></li>
        <li><svg><use href="#ftab"/></svg><span>players</span><svg class="pin"><use href="#pin"/></svg></li>
        <li><svg><use href="#ftab"/></svg><span>Final</span></li>
        <li><svg><use href="#ftab"/></svg><span class="long">libraries_data_so</span></li>
        <li><svg><use href="#ftab"/></svg><span>Roms</span></li>
        <li><svg><use href="#ftab"/></svg><span>Week3</span></li>
        <li class="od"><svg class="cloud" viewBox="0 0 13 9"><path d="M1 8Q-1 4 3 3q2-4 6-1 4 1 4 4 0 3-3 3H2z" fill="#0870c8"/><path d="M2 8q2-4 6-3l5 3-2 1H3z" fill="#28a3e8"/></svg><span>OneDrive</span></li>
      </ul>
      <div class="vs dv"><svg class="up"><use href="#chev"/></svg><i></i><svg class="dn"><use href="#chev"/></svg></div>
      <div class="files">
        <div class="cols"><span>Name</span><svg class="up c7"><use href="#chev"/></svg><span>Date modified</span><span>Type</span><span>Size</span></div>
        <p>No items match your search.</p>
        <div class="hs"><svg class="lf"><use href="#chev"/></svg><i></i><svg class="rt"><use href="#chev"/></svg></div>
      </div>
    </div>
    <div class="foot"><label>Folder:</label><div class="fi"><i></i></div></div>
    <div class="acts"><button class="prim">Select Folder</button><button>Cancel</button></div>
    <svg class="sz" viewBox="0 0 8 8"><path d="M6 0h2v2H6zM6 3h2v2H6zM3 3h2v2H3zM0 6h2v2H0zM3 6h2v2H3zM6 6h2v2H6z" fill="#bbb"/></svg>
  </div>
</div>
</body>
</html>
```
FILE: styles.css
```css
* { box-sizing: border-box; }
body { margin: 0; background: #fff; overflow: hidden; }
.defs { position: absolute; width: 0; height: 0; }
svg { flex: none; display: block; }
ul { list-style: none; margin: 0; padding: 0; }
i { font-style: normal; }
button { font: inherit; padding: 0; color: inherit; }

.app { position: relative; width: 1193px; height: 657px; overflow: hidden; background: #f0f0f0; color: #333; font: 8.8px/15px "Open Sans", "Noto Sans", sans-serif; display: flex; flex-direction: column; white-space: nowrap; }
.i12 { width: 12px; height: 12px; }
.c7 { width: 7px; height: 7px; }
.tiny { font: bold 6px "Open Sans", sans-serif; fill: #333; }
.faded { fill: #888; }
.db { font: bold 6px "Open Sans", sans-serif; fill: #cfe0f0; }
.qm { font: bold 11px "Liberation Serif", serif; fill: #dceaf6; }
.up { transform: rotate(-90deg); }
.dn { transform: rotate(90deg); }
.lf { transform: rotate(180deg); }

.title { height: 24px; padding-top: 8px; display: flex; align-items: center; background: #fff; color: #8c8c8c; flex: none; }
.title .i12 { margin: 0 6px 0 -5px; }
.title > span { margin-left: -2px; }
.wins { margin-left: auto; margin-right: 16px; display: flex; gap: 28px; align-items: center; }
.wins svg { width: 9px; height: 9px; }
.min { width: 8px; height: 1px; background: #999; }
.menu { height: 18px; flex: none; display: flex; gap: 10.350px; background: #fff; padding-top: 2px; margin-left: -3px; color: #999; font-size: 8.750px; }

.tb { height: 21px; flex: none; display: flex; border-bottom: 1px solid #d3d3d3; }
.grp { display: flex; align-items: center; border-right: 1px solid #cfcfcf; flex: none; }
.grp.last { border: 0; }
.grp svg { width: 19.400px; height: 15px; padding: 0 2.200px; }
.grp svg.on { height: 19px; padding: 2px; background: #c2e0f8; }
.g137 { width: 137px; } .g280 { width: 280px; } .g98 { width: 99px; } .g251 { width: 250px; }
.g164 { width: 165px; } .g86 { width: 86px; } .g126 { width: 126px; } .g87 { width: 86px; }
.grip { width: 2px; height: 16px; margin: 0 2.500px 0 3px; background: repeating-linear-gradient(#bbb 0 1px, transparent 1px 2px); }
.dd { width: 9.700px; display: flex; justify-content: center; flex: none; }
.dd::after { content: ""; border: 3px solid transparent; border-top: 3px solid #111; border-bottom: 0; }
.dd.dim::after, .dd.gray::after { border-top-color: #777; }
.dd.blue::after { border-top-color: #24405f; border-left-width: 2.500px; border-right-width: 2.500px; }
.third { border-bottom-color: #bbb; align-items: center; }
.ezi { width: 20px; height: 18px; padding: 1px 2px; background: #c2e0f8; }

.work { flex: none; height: 525px; display: flex; }
.left { width: 233px; flex: none; display: flex; flex-direction: column; }
.dt { height: 15px; margin-top: 1px; background: #dadada; display: flex; align-items: center; gap: 9px; padding-right: 6px; flex: none; font-size: 8.900px; }
.dt span { flex: 1; padding-left: 3px; }
.dt.cut span { padding-left: 0; margin-left: -3px; }
.dt svg { width: 7px; height: 7px; }
.mini { height: 17px; display: flex; align-items: center; flex: none; }
.mini svg { width: 10px; height: 10px; margin-right: 4.500px; }
.m1 { margin-left: -4px; }
.m2 { margin-left: -4px; height: 17px; }
.m2 .dd { margin: 0 2px 0 -3px; }
.tree li { height: 14.970px; display: flex; align-items: center; }
.tree svg { width: 12px; height: 12px; margin-right: 4px; }
.browser { height: 321px; flex: none; border: 1px solid #aaa; border-left: 0; background: #fff; font-size: 8.700px; padding-top: .5px; }
.browser i { width: 11px; height: 5px; }
.browser .ex i::before { content: ""; display: block; width: 4px; height: 4px; margin-left: -2px; border: solid #999; border-width: 1px 1px 0 0; transform: rotate(45deg); }
.gap { margin-top: 3px; }
.layers { flex: 1; background: #fff; border: 1px solid #aaa; border-left: 0; padding-top: 1px; }
.layers > div { display: flex; align-items: center; height: 13.500px; }
.ck { width: 11px; height: 11px; }
.l1 { gap: 4px; padding-left: 0; }
.l1 .c7 { margin-right: -1px; }
.l1 strong { text-decoration: underline; color: #222; }
.l2 { padding-left: 26px; gap: 4px; }
.sw { width: 11px; height: 11px; background: #b2b2b2; border: 1px solid #999; }
.or { background: #ffa500; border-color: #c98a1c; }

.canvas { width: 660px; margin: 0 2px 0 3px; background: #fff; border: 1px solid #aaa; position: relative; }
.map { width: 430px; height: 130px; margin: 29px 0 0 128px; }
.dot { position: absolute; left: 89px; top: 203px; width: 4px; height: 5px; background: #444; border-radius: 50%; }

.right { width: 295px; display: flex; flex-direction: column; }
.m3 { padding-left: 3px; height: 16px; }
.m3 i { width: 1px; height: 10px; background: #ccc; margin-right: 4px; }
.search { height: 14px; flex: none; background: #fff; border: 1px solid #999; display: flex; align-items: center; color: #888; gap: 5px; padding-left: 5px; font-size: 8.300px; }
.search svg { width: 8px; height: 8px; }
.plist { margin-top: 1px; height: 349px; flex: none; border: 1px solid #999; background: #fff; display: flex; overflow: hidden; }
.tools { flex: 1; margin-top: -.5px; }
.tools svg:nth-child(2) { margin-right: 4px; }
.tools svg.c7 { width: 7px; height: 8px; margin: 0 7px 0 4px; color: #777; }
.vs { width: 12px; background: #f0f0f0; display: flex; flex-direction: column; align-items: center; padding: 3px 0; color: #444; }
.vs svg { width: 8px; height: 8px; }
.vs i { width: 12px; height: 308px; background: #cdcdcd; margin: 1px 0 auto; }
.tabs { height: 15px; flex: none; display: flex; font: 7.700px/15px "Noto Sans", sans-serif; margin-bottom: 3px; }
.tabs span { width: 72px; text-align: center; border-right: 1px solid #ddd; }
.tabs .cur { width: 87px; background: #fff; }
.form { display: grid; grid-template-columns: 81px 120px; grid-template-rows: 14px 14px; row-gap: 5px; padding: 13px 0 0 13px; font: 7.500px/13px "Noto Sans", sans-serif; }
.form label { line-height: 11px; }
.combo, .spin { border: 1px solid #bbb; display: flex; justify-content: space-between; align-items: center; padding: 0 3px 0 2px; }
.combo { background: #e1e1e1; }
.combo svg { width: 7px; height: 7px; color: #666; }
.spin { background: #fff; padding-right: 0; border-color: #999; }
.spin svg, .sb { width: 10px; height: 100%; padding: 1.500px; background: #eee; }
.btns { display: flex; margin: 5px 0 0 14px; height: 19px; font: 7.500px/17px "Noto Sans", sans-serif; }
.btns button { background: #e1e1e1; border: 1px solid #bbb; }
.save { width: 57px; margin-right: 11px; }
.inp { width: 101px; margin-right: 6px; background: #fff; border: 1px solid #999; padding-left: 2px; }
.dots { width: 25px; }

.status { height: 20px; padding-top: 2px; flex: none; display: flex; align-items: center; font: 7.500px/13px "Noto Sans", sans-serif; }
.loc { width: 142px; height: 14px; margin-right: 5px; background: #fff; border: 1px solid #999; border-left: 0; display: flex; align-items: center; gap: 4px; color: #888; padding-left: 1px; }
.loc svg { width: 8px; height: 8px; }
.msg { width: 490px; font-size: 7.800px; }
.w40 { width: 40px; } .w21 { width: 21px; } .w35 { width: 35px; } .w45 { width: 45px; }
.box { height: 14px; background: #fff; border: 1px solid #aaa; padding-left: 2px; line-height: 12px; }
.w69 { width: 69px; } .w56 { width: 57px; } .w54 { width: 54px; }
.sp { display: flex; justify-content: space-between; align-items: center; }
.sp .c7 { margin-right: 4px; color: #777; }
.mouse { width: 12px; height: 13px; margin: 0 9px 0 2px; }
.lock { width: 11px; height: 13px; margin: 0 5px 0 6px; }
.rot { margin-left: 6px; }
.status .ck { width: 10px; height: 10px; margin: 0 4px 0 3px; }
.ren { width: 37px; }
.glb { width: 11px; height: 12px; margin-right: 3px; }
.bub { width: 13px; height: 14px; margin-left: 10px; }
.task { flex: 1; display: flex; background: linear-gradient(90deg, #161616 0 27%, #1b1b1b 60%, #303030 85%, #222); position: relative; overflow: hidden; }
.task span { position: absolute; left: 1109px; top: 1px; color: #ddd; font-size: 8.500px; line-height: 15px; }
.task i { position: absolute; bottom: -2px; height: 3px; width: 8px; border-radius: 4px 4px 0 0; }
.t1 { left: 85px; background: #c2402b; } .t2 { left: 241px; background: #28c954; } .t3 { left: 275px; background: #ddd; }
.t4 { left: 317px; background: #3487d0; }
.task .t5 { left: 342px; bottom: 0; width: 38px; height: 8px; border-radius: 0; background: #3d3d3d; }

.dialog { position: absolute; left: 328px; top: 249px; width: 570px; height: 335px; background: #f0f0f0; border: 1px solid #999; border-right: 2px solid #888; box-shadow: 0 3px 9px rgba(0,0,0,.42); display: flex; flex-direction: column; font-size: 9.100px; }
.dh { height: 24px; background: #fff; display: flex; align-items: center; padding: 0 8px 2px 5px; gap: 4px; font-size: 9px; }
.dx { width: 9px; height: 9px; margin-left: auto; }
.nav { height: 31px; background: #fff; display: flex; align-items: center; padding: 0 7px 2px 9px; }
.nav > div { height: 25px; border: 1px solid #d9d9d9; display: flex; align-items: center; }
.arr { width: 56px; height: 12px; }
.upa { width: 10px; height: 12px; margin: 0 5px 0 3px; }
.addr { width: 286px; }
.addr .i12 { margin: 0 5px 0 1px; }
.addr em { font-style: normal; width: 11px; color: #666; }
.addr .c7 { margin-right: 7px; color: #777; }
.a1 { width: 40px; } .a2 { width: 38px; } .a3 { width: 26px; }
.addr .end { margin-left: auto; width: 8px; height: 8px; }
.nav .rel { width: 27px; border-left: 0; justify-content: center; margin-right: 7px; }
.rel svg { width: 10px; height: 10px; }
.nav .sf { flex: 1; color: #777; padding-left: 10px; gap: 10px; }
.sf svg { width: 11px; height: 11px; color: #999; }
.flip { transform: scaleX(-1); }
.cmd { height: 25px; background: #f5f6f7; display: flex; align-items: center; padding: 0 11px 1px 13px; color: #405a77; }
.org { width: 39px; }
.nf { margin-left: 20px; }
.vw { width: 12px; height: 10px; margin: 0 6px 0 auto; }
.hq { width: 12px; height: 12px; border-radius: 50%; background: #0a64bd; color: #fff; text-align: center; line-height: 12px; font-weight: 600; margin-left: 20px; }
.body { height: 190px; display: flex; background: #fff; }
.side { width: 109px; overflow: hidden; margin-top: -1px; font-size: 9px; }
.side li { height: 18.750px; display: flex; align-items: center; padding-left: 25px; }
.side svg { width: 12px; height: 12px; margin-right: 3px; }
.side .pin { width: 8px; height: 8px; margin: 0 3px 0 auto; }
.side .od { padding-left: 18px; margin-top: 6px; }
.side .cloud { width: 13px; height: 9px; }
.long { letter-spacing: -.12px; }
.dv { padding: 2px 0; }
.dv i { height: 104px; margin-top: 28px; }
.files { flex: 1; display: flex; flex-direction: column; }
.cols { height: 20px; display: flex; color: #5c6f85; line-height: 20px; position: relative; font-size: 9px; }
.cols span { border-left: 1px solid #e5e5e5; padding-left: 4px; }
.cols span:nth-of-type(1) { width: 215px; padding-left: 17px; border: 0; }
.cols span:nth-of-type(2) { width: 113px; }
.cols span:nth-of-type(3) { width: 93px; }
.cols svg { position: absolute; left: 111px; top: -1px; color: #999; }
.files p { margin: 10px 0 auto 167px; color: #777; font-size: 8.800px; }
.hs { height: 13px; display: flex; align-items: center; background: #f0f0f0; padding: 0 2px 0 5px; color: #444; }
.hs svg { width: 8px; height: 8px; }
.hs i { width: 378px; height: 11px; background: #cdcdcd; margin: 0 auto 0 4px; }
.foot { margin-top: 9px; height: 20px; display: flex; align-items: center; padding-left: 91px; }
.foot label { width: 33px; }
.fi { width: 432px; height: 20px; background: #fff; border: 1px solid #56a5e4; padding: 3px; }
.fi i { display: block; width: 1px; height: 12px; background: #222; }
.acts { margin-top: 4px; display: flex; gap: 10px; justify-content: flex-end; padding-right: 12px; }
.acts button { width: 68px; height: 20px; background: #e1e1e1; border: 1px solid #c0c0c0; }
.acts .prim { width: 83px; background: #e5f1fb; border-color: #4aa0e0; }
.sz { position: absolute; right: 1px; bottom: 1px; width: 7px; height: 7px; }
```
